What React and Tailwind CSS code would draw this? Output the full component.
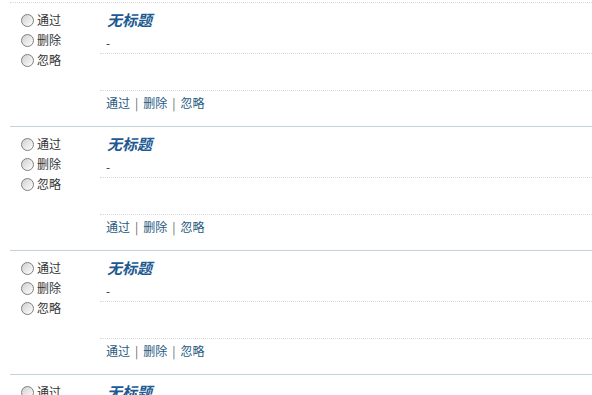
import React from "react";

const font = { fontFamily: '"Noto Sans CJK SC", "Noto Sans", sans-serif' };

function Radio({ label }) {
  return (
    <label className="flex h-[20px] items-center gap-[3px] text-[12px] text-[#333]">
      <span className="block h-[13px] w-[13px] rounded-full border border-[#7f7f7f] bg-[linear-gradient(135deg,#cfcfcf,#ffffff)]" />
      <span>{label}</span>
    </label>
  );
}

function Row() {
  return (
    <div className="ml-[10px] flex h-[124px] border-b border-[#c5d2da]">
      <div className="w-[90px] shrink-0 pl-[11px] pt-[7px]">
        <Radio label="通过" />
        <Radio label="删除" />
        <Radio label="忽略" />
      </div>
      <div className="flex flex-1 flex-col">
        <div className="h-[24px] pl-[7px] pt-[4px]">
          <span className="text-[15px] font-bold italic leading-[20px] text-[#1d5a92]">无标题</span>
        </div>
        <div className="h-[27px] border-b border-dotted border-[#dadada] pl-[6px] pt-[6px] text-[12px] leading-[20px] text-[#333]">
          -
        </div>
        <div className="h-[36px]" />
        <div className="border-t border-dotted border-[#dadada] pl-[6px] pt-[2px] text-[12px] leading-[20px]">
          <span className="text-[#1f5a80]">通过</span>
          <span className="mx-[5px] text-[#666]">|</span>
          <span className="text-[#1f5a80]">删除</span>
          <span className="mx-[5px] text-[#666]">|</span>
          <span className="text-[#1f5a80]">忽略</span>
        </div>
      </div>
    </div>
  );
}

export default function App() {
  return (
    <div className="h-[395px] w-[592px] overflow-hidden bg-white" style={font}>
      <div className="h-[2px]" />
      <div className="ml-[10px] border-t border-dotted border-[#dadada]" />
      <Row />
      <Row />
      <Row />
      <Row />
    </div>
  );
}
